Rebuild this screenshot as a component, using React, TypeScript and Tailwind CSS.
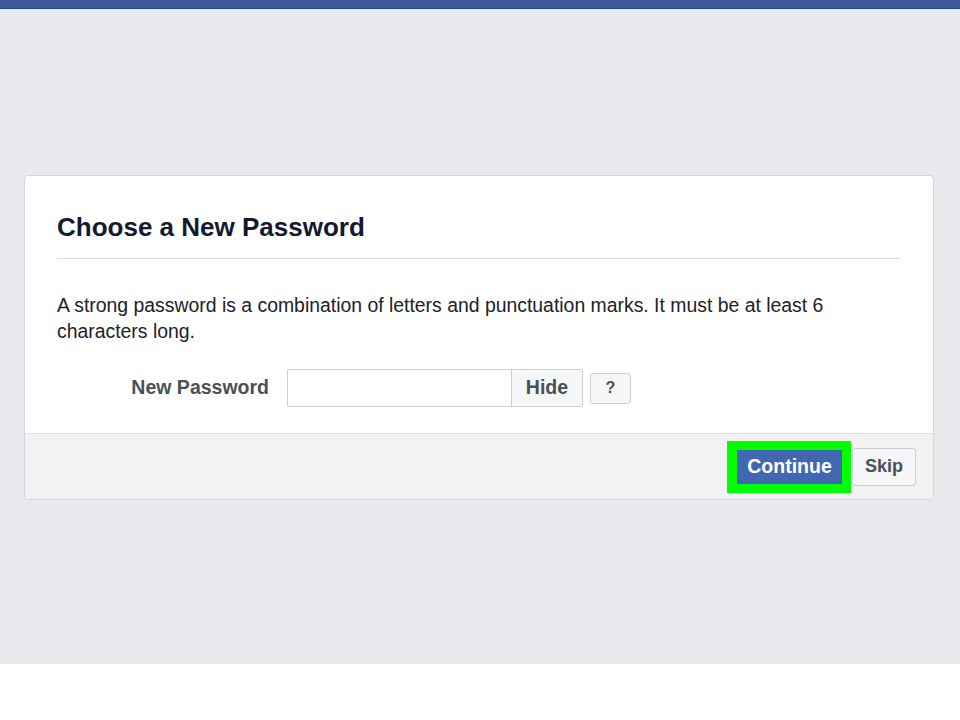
export default function App() {
  return (
    <div
      className="w-[960px] h-[720px] flex flex-col bg-white"
      style={{ fontFamily: '"Liberation Sans", Arial, sans-serif' }}
    >
      <div className="h-[8px] bg-[#3b5998]" />
      <div className="h-[1px] bg-[#29487d]" />
      <div className="h-[2px] bg-[#dfe8f5]" />
      <div className="h-[653px] bg-[#e9eaed] pt-[164px] px-[24px]">
        <div className="w-[910px] rounded-[4px] border border-[#d3d6db] bg-white overflow-hidden">
          <div className="px-[32px] pt-[36px]">
            <h2 className="text-[26px] leading-[30px] font-bold text-[#141a2e] pb-[16px] border-b border-[#d8dbe0]">
              Choose a New Password
            </h2>
            <p className="mt-[33px] text-[19.4px] leading-[26px] text-[#1d2129] pr-[10px]">
              A strong password is a combination of letters and punctuation marks. It must be at least 6 characters long.
            </p>
            <div className="flex items-center mt-[25px] mb-[26px]">
              <span className="w-[212px] text-right text-[19.5px] font-bold text-[#4b4f56]">New Password</span>
              <div className="ml-[18px] flex border border-[#ccd0d5] rounded-[2px] h-[38px]">
                <input className="w-[223px] h-full outline-none px-2" />
                <button className="w-[71px] h-full bg-[#f5f6f7] border-l border-[#ccd0d5] text-[19.5px] font-bold text-[#4b4f56]">
                  Hide
                </button>
              </div>
              <button className="ml-[7px] w-[41px] h-[31px] rounded-[3px] border border-[#ccd0d5] bg-[#f5f6f7] text-[16px] font-bold text-[#4b4f56]">
                ?
              </button>
            </div>
          </div>
          <div className="h-[66px] bg-[#f2f2f2] border-t border-[#dddfe2] flex items-center justify-end pr-[17px] gap-[1px]">
            <div className="border-[9px] border-l-[10px] border-[#00ff00] bg-[#00ff00] mt-[1px]">
              <button className="w-[105px] h-[34px] bg-[#4267b2] text-white text-[19.5px] font-bold border border-[#4267b2]">
                Continue
              </button>
            </div>
            <button className="w-[64px] h-[38px] rounded-[3px] border border-[#ccd0d5] bg-[#f5f6f7] text-[18px] font-bold text-[#4b4f56]">
              Skip
            </button>
          </div>
        </div>
      </div>
    </div>
  );
}
